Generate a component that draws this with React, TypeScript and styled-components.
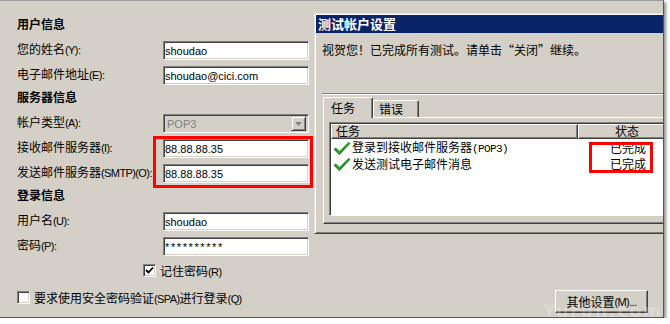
import React from "react";
import styled, { createGlobalStyle } from "styled-components";

const GlobalStyle = createGlobalStyle`
  html, body { margin: 0; padding: 0; background: #ffffff; }
  body {
    font-family: "Liberation Sans", "Noto Sans CJK SC", sans-serif;
    font-size: 12px;
    color: #000;
  }
  * { box-sizing: border-box; }
`;

const Frame = styled.div`
  position: relative;
  width: 664px;
  height: 318px;
  background: #d4d0c8;
  border-top: 1px solid #9c9c9c;
  border-right: 1px solid #555;
  border-bottom: 1px solid #555;
  box-shadow: 2px 2px 3px rgba(0, 0, 0, 0.45);
  display: flex;
  overflow: hidden;
`;

/* ---------- left account form ---------- */
const LeftPanel = styled.div`
  width: 314px;
  flex: none;
  padding: 15px 0 0 17px;
  display: flex;
  flex-direction: column;
`;

const SectionTitle = styled.div<{ $first?: boolean }>`
  font-family: "Noto Sans CJK SC", sans-serif;
  font-weight: 700;
  font-size: 12px;
  height: 16px;
  line-height: 16px;
  margin: ${(p) => (p.$first ? "0 0 9px" : "4px 0 9px")};
`;

const FieldGroup = styled.div`
  position: relative;
  display: flex;
  flex-direction: column;
  gap: 6px;
`;

const SubGroup = styled(FieldGroup)`
  margin-top: 6px;
`;

const Row = styled.div`
  display: flex;
  align-items: center;
  height: 19px;
`;

const Label = styled.span`
  width: 146px;
  flex: none;
  font-size: 12px;
  line-height: 19px;
  white-space: nowrap;
`;

const Lat = styled.span`
  font-family: "Liberation Sans", sans-serif;
  font-size: 11px;
  letter-spacing: -0.6px;
`;

const TextBox = styled.input<{ $spaced?: boolean }>`
  width: 146px;
  height: 19px;
  padding: 0 1px;
  margin: 0;
  background: #fff;
  border: 1px solid;
  border-color: #808080 #fff #fff #808080;
  box-shadow: inset 1px 1px #404040, inset -1px -1px #d4d0c8;
  font-family: "Liberation Sans", sans-serif;
  font-size: 11px;
  letter-spacing: ${(p) => (p.$spaced ? "1.6px" : "0")};
  color: #000;
  outline: none;
`;

const SelectBox = styled.div`
  width: 146px;
  height: 19px;
  display: flex;
  align-items: center;
  padding: 0 2px 0 3px;
  background: #d4d0c8;
  border: 1px solid;
  border-color: #808080 #fff #fff #808080;
  box-shadow: inset 1px 1px #404040, inset -1px -1px #d4d0c8;
  font-family: "Liberation Sans", sans-serif;
  font-size: 11px;
  color: #808080;
`;

const SelectText = styled.span`
  flex: 1;
`;

const DropButton = styled.span`
  width: 15px;
  height: 15px;
  display: flex;
  align-items: center;
  justify-content: center;
  background: #d4d0c8;
  border: 1px solid;
  border-color: #d4d0c8 #404040 #404040 #d4d0c8;
  box-shadow: inset 1px 1px #fff, inset -1px -1px #808080;
`;

const Annotation = styled.div<{ $l: number; $t: number; $w: number; $h: number }>`
  position: absolute;
  left: ${(p) => p.$l}px;
  top: ${(p) => p.$t}px;
  width: ${(p) => p.$w}px;
  height: ${(p) => p.$h}px;
  border: 3px solid #ff0000;
  pointer-events: none;
`;

const CheckRow = styled.div<{ $indent: number; $top: number }>`
  display: flex;
  align-items: center;
  gap: 4px;
  height: 16px;
  margin-top: ${(p) => p.$top}px;
  padding-left: ${(p) => p.$indent}px;
  font-size: 12px;
  white-space: nowrap;
`;

const CheckBox = styled.span`
  width: 13px;
  height: 13px;
  flex: none;
  display: flex;
  align-items: center;
  justify-content: center;
  background: #fff;
  border: 1px solid;
  border-color: #808080 #fff #fff #808080;
  box-shadow: inset 1px 1px #404040, inset -1px -1px #d4d0c8;
`;

/* ---------- right: test dialog ---------- */
const RightColumn = styled.div`
  flex: 1;
  display: flex;
  flex-direction: column;
  padding-top: 12px;
  min-width: 0;
`;

const Dialog = styled.div`
  height: 221px;
  padding: 1px 0 1px 1px;
  border-top: 1px solid #e4e2de;
  border-left: 1px solid #e4e2de;
  border-bottom: 1px solid #404040;
  box-shadow: inset 1px 1px #fff, inset 0 -1px #808080;
  display: flex;
  flex-direction: column;
  overflow: hidden;
`;

const TitleBar = styled.div`
  height: 18px;
  flex: none;
  background: #0a246a;
  color: #fff;
  font-family: "Noto Sans CJK SC", sans-serif;
  font-weight: 700;
  font-size: 13px;
  line-height: 18px;
  padding-left: 2px;
`;

const DialogBody = styled.div`
  padding: 9px 0 0 6px;
  display: flex;
  flex-direction: column;
`;

const Message = styled.div`
  font-family: "Noto Sans CJK SC", sans-serif;
  font-size: 12px;
  line-height: 16px;
  white-space: nowrap;
`;

const Separator = styled.div`
  margin-top: 35px;
  border-top: 1px solid #808080;
  border-bottom: 1px solid #fff;
`;

const TabStrip = styled.div`
  margin-top: 2px;
  padding-left: 1px;
  height: 20px;
  display: flex;
  align-items: flex-end;
  position: relative;
  z-index: 1;
`;

const Tab = styled.div<{ $active?: boolean; $w: number }>`
  width: ${(p) => p.$w}px;
  height: ${(p) => (p.$active ? 21 : 17)}px;
  margin-bottom: ${(p) => (p.$active ? -1 : 0)}px;
  padding-left: ${(p) => (p.$active ? 7 : 5)}px;
  background: #d4d0c8;
  border-top: 1px solid #fff;
  border-left: 1px solid #fff;
  border-right: 1px solid #404040;
  box-shadow: inset -1px 0 #808080;
  border-radius: 2px 2px 0 0;
  font-family: "Noto Sans CJK SC", sans-serif;
  font-size: 12px;
  line-height: ${(p) => (p.$active ? 19 : 16)}px;
`;

const TabPanel = styled.div`
  margin-left: 1px;
  height: 107px;
  padding: 4px 0 0 5px;
  border-top: 1px solid #fff;
  border-left: 1px solid #fff;
  border-bottom: 1px solid #404040;
  box-shadow: inset 0 -1px #808080;
`;

const ListView = styled.div`
  width: 360px;
  height: 94px;
  background: #fff;
  border: 1px solid;
  border-color: #808080 #fff #fff #808080;
  box-shadow: inset 1px 1px #404040;
  padding: 1px 0 0 1px;
`;

const HeaderRow = styled.div`
  display: flex;
  height: 15px;
`;

const HeaderCell = styled.div<{ $w: number; $center?: boolean }>`
  width: ${(p) => p.$w}px;
  flex: none;
  background: #d4d0c8;
  border-top: 1px solid #fff;
  border-left: 1px solid #fff;
  border-right: 1px solid #404040;
  border-bottom: 1px solid #404040;
  box-shadow: inset -1px -1px #808080;
  padding-left: ${(p) => (p.$center ? 0 : 4)}px;
  text-align: ${(p) => (p.$center ? "center" : "left")};
  font-family: "Noto Sans CJK SC", sans-serif;
  font-size: 12px;
  line-height: 12px;
`;

const Rows = styled.div`
  position: relative;
  padding-top: 1px;
`;

const ItemRow = styled.div`
  display: flex;
  align-items: center;
  height: 16px;
`;

const ItemName = styled.div`
  width: 247px;
  flex: none;
  display: flex;
  align-items: center;
  gap: 1px;
  padding-left: 2px;
  font-family: "Noto Sans CJK SC", sans-serif;
  font-size: 12px;
  line-height: 16px;
  white-space: nowrap;
`;

const Mono = styled.span`
  font-family: "Liberation Mono", monospace;
  font-size: 11px;
  letter-spacing: -0.6px;
`;

const ItemStatus = styled.div`
  width: 98px;
  flex: none;
  text-align: right;
  padding-right: 30px;
  font-family: "Noto Sans CJK SC", sans-serif;
  font-size: 12px;
  line-height: 16px;
`;

const ButtonBar = styled.div`
  margin-top: 56px;
  display: flex;
  justify-content: flex-end;
  padding-right: 15px;
`;

const Button = styled.div`
  width: 93px;
  height: 23px;
  display: flex;
  align-items: center;
  justify-content: center;
  background: #d4d0c8;
  border: 1px solid;
  border-color: #fff #404040 #404040 #fff;
  box-shadow: inset -1px -1px #808080;
  font-size: 12px;
  white-space: nowrap;
`;

const Watermark = styled.div`
  position: absolute;
  right: 0;
  bottom: -4px;
  font-family: "DejaVu Sans", sans-serif;
  font-weight: 700;
  font-size: 17px;
  letter-spacing: 2px;
  color: rgba(255, 255, 255, 0.22);
  pointer-events: none;
`;

const GreenCheck = () => (
  <svg width="18" height="15" viewBox="0 0 18 15">
    <path
      d="M1 8.4 L2.6 6.8 L6.4 10.4 L15.8 1.2 L17 2.4 L6.4 13.8 Z"
      fill="#22a022"
      stroke="#0d6a0d"
      strokeWidth="0.6"
      strokeLinejoin="round"
    />
  </svg>
);

const TickMark = () => (
  <svg width="9" height="9" viewBox="0 0 9 9">
    <path d="M1 4 L3.5 6.5 L8 1.5" fill="none" stroke="#000" strokeWidth="1.8" />
  </svg>
);

const DownArrow = () => (
  <svg width="7" height="4" viewBox="0 0 7 4">
    <path d="M0 0 H7 L3.5 4 Z" fill="#808080" />
  </svg>
);

export default function App() {
  return (
    <>
      <GlobalStyle />
      <Frame>
        <LeftPanel>
          <SectionTitle $first>用户信息</SectionTitle>
          <FieldGroup>
            <Row>
              <Label>您的姓名<Lat>(Y):</Lat></Label>
              <TextBox readOnly value="shoudao" />
            </Row>
            <Row>
              <Label>电子邮件地址<Lat>(E):</Lat></Label>
              <TextBox readOnly value="shoudao@cici.com" />
            </Row>
          </FieldGroup>

          <SectionTitle>服务器信息</SectionTitle>
          <Row>
            <Label>帐户类型<Lat>(A):</Lat></Label>
            <SelectBox>
              <SelectText>POP3</SelectText>
              <DropButton>
                <DownArrow />
              </DropButton>
            </SelectBox>
          </Row>
          <SubGroup>
            <Row>
              <Label>接收邮件服务器<Lat>(I):</Lat></Label>
              <TextBox readOnly value="88.88.88.35" />
            </Row>
            <Row>
              <Label>发送邮件服务器<Lat>(SMTP)(O):</Lat></Label>
              <TextBox readOnly value="88.88.88.35" />
            </Row>
            <Annotation $l={136} $t={-3} $w={160} $h={52} />
          </SubGroup>

          <SectionTitle>登录信息</SectionTitle>
          <FieldGroup>
            <Row>
              <Label>用户名<Lat>(U):</Lat></Label>
              <TextBox readOnly value="shoudao" />
            </Row>
            <Row>
              <Label>密码<Lat>(P):</Lat></Label>
              <TextBox readOnly $spaced value="**********" />
            </Row>
          </FieldGroup>

          <CheckRow $indent={126} $top={6}>
            <CheckBox>
              <TickMark />
            </CheckBox>
            <span>
              记住密码<Lat>(R)</Lat>
            </span>
          </CheckRow>
          <CheckRow $indent={0} $top={11}>
            <CheckBox />
            <span>
              要求使用安全密码验证<Lat>(SPA)</Lat>进行登录<Lat>(Q)</Lat>
            </span>
          </CheckRow>
        </LeftPanel>

        <RightColumn>
          <Dialog>
            <TitleBar>测试帐户设置</TitleBar>
            <DialogBody>
              <Message>视贺您！已完成所有测试。请单击“关闭”继续。</Message>
              <Separator />
              <TabStrip>
                <Tab $active $w={50}>任务</Tab>
                <Tab $w={46}>错误</Tab>
              </TabStrip>
              <TabPanel>
                <ListView>
                  <HeaderRow>
                    <HeaderCell $w={247}>任务</HeaderCell>
                    <HeaderCell $w={98} $center>状态</HeaderCell>
                  </HeaderRow>
                  <Rows>
                    <ItemRow>
                      <ItemName>
                        <GreenCheck />
                        <span>
                          登录到接收邮件服务器<Mono>(POP3)</Mono>
                        </span>
                      </ItemName>
                      <ItemStatus>已完成</ItemStatus>
                    </ItemRow>
                    <ItemRow>
                      <ItemName>
                        <GreenCheck />
                        <span>发送测试电子邮件消息</span>
                      </ItemName>
                      <ItemStatus>已完成</ItemStatus>
                    </ItemRow>
                    <Annotation $l={258} $t={3} $w={64} $h={31} />
                  </Rows>
                </ListView>
              </TabPanel>
            </DialogBody>
          </Dialog>
          <ButtonBar>
            <Button>
              其他设置<Lat>(M)...</Lat>
            </Button>
          </ButtonBar>
        </RightColumn>
        <Watermark>Yuruh.com</Watermark>
      </Frame>
    </>
  );
}
